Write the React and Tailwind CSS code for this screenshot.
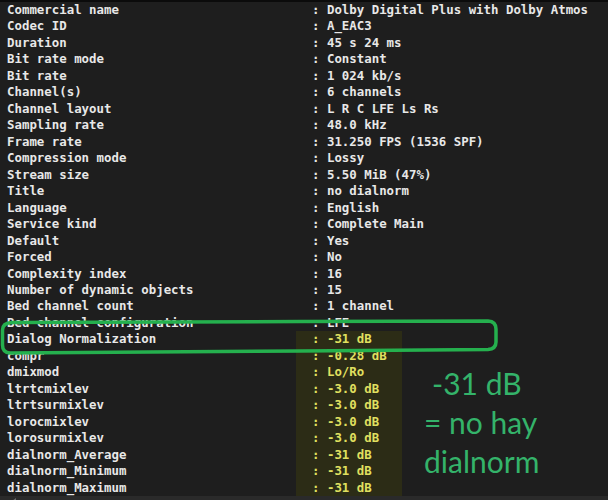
import React from 'react'

const rows = [
    ['Commercial name', 'Dolby Digital Plus with Dolby Atmos'],
    ['Codec ID', 'A_EAC3'],
    ['Duration', '45 s 24 ms'],
    ['Bit rate mode', 'Constant'],
    ['Bit rate', '1 024 kb/s'],
    ['Channel(s)', '6 channels'],
    ['Channel layout', 'L R C LFE Ls Rs'],
    ['Sampling rate', '48.0 kHz'],
    ['Frame rate', '31.250 FPS (1536 SPF)'],
    ['Compression mode', 'Lossy'],
    ['Stream size', '5.50 MiB (47%)'],
    ['Title', 'no dialnorm'],
    ['Language', 'English'],
    ['Service kind', 'Complete Main'],
    ['Default', 'Yes'],
    ['Forced', 'No'],
    ['Complexity index', '16'],
    ['Number of dynamic objects', '15'],
    ['Bed channel count', '1 channel'],
    ['Bed channel configuration', 'LFE'],
    ['Dialog Normalization', '-31 dB', true],
    ['compr', '-0.28 dB', true],
    ['dmixmod', 'Lo/Ro', true],
    ['ltrtcmixlev', '-3.0 dB', true],
    ['ltrtsurmixlev', '-3.0 dB', true],
    ['lorocmixlev', '-3.0 dB', true],
    ['lorosurmixlev', '-3.0 dB', true],
    ['dialnorm_Average', '-31 dB', true],
    ['dialnorm_Minimum', '-31 dB', true],
    ['dialnorm_Maximum', '-31 dB', true],
]

const Row = ({ label, value, marked }) => (
    <div className="flex h-[16.48px] items-center whitespace-pre">
        <span className="w-[296px] shrink-0 pl-[7px] text-[#e8e8e8]">{label}</span>
        {marked ? (
            <span className="h-full w-[106px] shrink-0 bg-[#2c2c16] pl-[16px] leading-[16.48px] text-[#e0e060]">{': ' + value}</span>
        ) : (
            <span className="pl-[16px] text-[#e8e8e8]">{': ' + value}</span>
        )}
    </div>
)

const App = () => {
    return (
        <div className="relative h-[500px] w-[608px] overflow-hidden bg-[#1e1e1e]">
            <div className="h-[2px] bg-[#0b0b0b]" />
            <div className="font-['DejaVu_Sans_Mono',monospace] text-[12.4px] font-bold leading-[16.48px]">
                {rows.map(([label, value, marked]) => (
                    <Row key={label} label={label} value={value} marked={marked} />
                ))}
            </div>
            <div className="flex h-[10px] items-center bg-[#2a2a2a] pl-[12px]">
                <span className="h-0 w-0 border-y-[3px] border-r-[4px] border-y-transparent border-r-[#6a6a6a]" />
                <span className="ml-[6px] h-[3px] w-[84px] rounded-full bg-[#707070]" />
            </div>

            {/* annotation */}
            <svg className="pointer-events-none absolute inset-0" width="608" height="500" viewBox="0 0 608 500">
                <path
                    d="M 12 322.5 L 300 321.5 L 488 321 Q 496 321.5 496 329 L 496 342 Q 496 349 488 349.5 L 300 351 L 10 353 Q 2.5 352.5 2.5 345 L 2.5 330 Q 2.5 323 12 322.5 Z"
                    fill="none"
                    stroke="#25b04e"
                    strokeWidth="3.5"
                    strokeLinejoin="round"
                />
            </svg>
            <div className="pointer-events-none absolute left-[424px] top-[364px] font-['Lato',sans-serif] text-[30px] leading-[39px] text-[#34b36a]">
                <div className="pl-[8px]">-31 dB</div>
                <div>= no hay</div>
                <div>dialnorm</div>
            </div>
        </div>
    )
}

export default App
